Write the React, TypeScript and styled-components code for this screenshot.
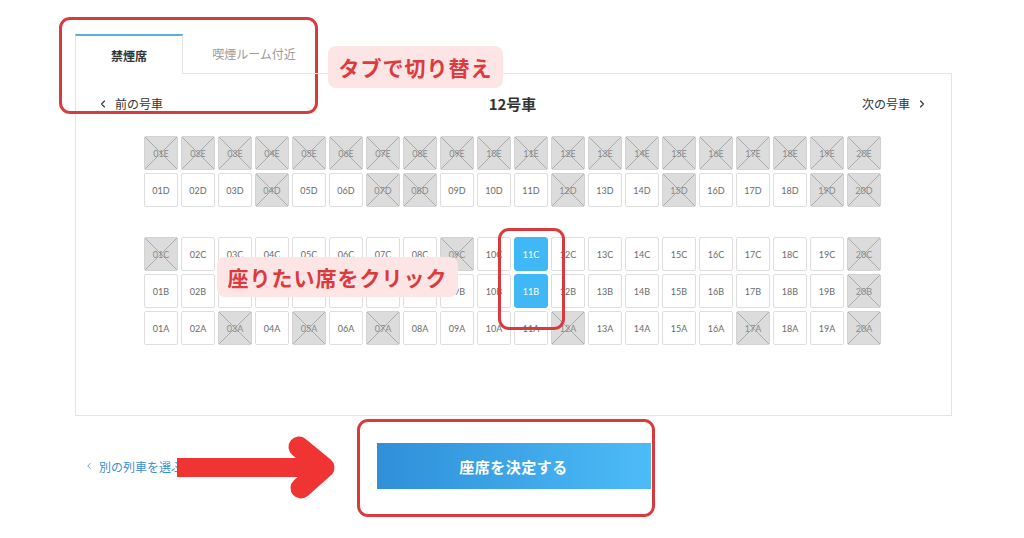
import { ChevronLeft, ChevronRight } from "lucide-react";
import styled, { createGlobalStyle, css } from "styled-components";

type SeatState = "free" | "taken" | "selected";

const GlobalStyle = createGlobalStyle`
	html, body {
		margin: 0;
		background: #ffffff;
		font-family: "Noto Sans CJK JP", "Noto Sans", sans-serif;
		color: #333333;
	}
`;

const Page = styled.div`
	position: relative;
	width: 1024px;
	height: 538px;
	overflow: hidden;
	padding: 34px 0 0 75px;
	box-sizing: border-box;
`;

const Content = styled.div`
	width: 877px;
`;

const TabBar = styled.div`
	display: flex;
	height: 40px;
	position: relative;
	z-index: 1;
	margin-bottom: -1px;
`;

const Tab = styled.div<{ $active?: boolean }>`
	display: flex;
	align-items: center;
	justify-content: center;
	box-sizing: border-box;
	font-size: 12px;
	${(p) =>
		p.$active
			? css`
					width: 108px;
					background: #fff;
					font-weight: 700;
					color: #333;
					border: 1px solid #e4e4e4;
					border-top: 2px solid #5aafdc;
					border-bottom: none;
			  `
			: css`
					width: 142px;
					color: #9a9a9a;
					border-bottom: 1px solid #e4e4e4;
			  `}
`;

const Panel = styled.div`
	border: 1px solid #e4e4e4;
	padding: 19px 23px 70px 21px;
`;

const Header = styled.div`
	display: grid;
	grid-template-columns: 1fr auto 1fr;
	align-items: center;
	height: 20px;
`;

const NavLink = styled.div<{ $right?: boolean }>`
	display: flex;
	align-items: center;
	gap: 6px;
	font-size: 12px;
	color: #333;
	justify-self: ${(p) => (p.$right ? "end" : "start")};
`;

const CarTitle = styled.div`
	font-size: 15px;
	font-weight: 700;
	color: #333;
`;

const SeatMap = styled.div`
	margin-top: 23px;
	display: flex;
	flex-direction: column;
	align-items: center;
	gap: 30px;
`;

const SeatBlock = styled.div`
	display: grid;
	grid-template-columns: repeat(20, 34px);
	grid-auto-rows: 34px;
	gap: 3px;
`;

const Seat = styled.div<{ $state: SeatState }>`
	display: flex;
	align-items: center;
	justify-content: center;
	box-sizing: border-box;
	border-radius: 2px;
	font-family: "Lato", "Open Sans", sans-serif;
	font-size: 9px;
	${(p) =>
		p.$state === "free" &&
		css`
			background: #fff;
			border: 1px solid #dedede;
			color: #6a6a6a;
		`}
	${(p) =>
		p.$state === "taken" &&
		css`
			background-color: #dcdcdc;
			background-image: linear-gradient(
					to top right,
					transparent calc(50% - 0.7px),
					#a9a9a9 50%,
					transparent calc(50% + 0.7px)
				),
				linear-gradient(
					to bottom right,
					transparent calc(50% - 0.7px),
					#a9a9a9 50%,
					transparent calc(50% + 0.7px)
				);
			border: 1px solid #d2d2d2;
			color: #8a8a8a;
		`}
	${(p) =>
		p.$state === "selected" &&
		css`
			background: #3fb8f5;
			border: 1px solid #3fb8f5;
			border-radius: 3px;
			color: #fff;
		`}
`;

const Footer = styled.div`
	display: grid;
	grid-template-columns: 1fr auto 1fr;
	align-items: center;
	margin-top: 27px;
`;

const BackLink = styled.div`
	display: flex;
	align-items: center;
	gap: 5px;
	padding-left: 9px;
	font-size: 12px;
	color: #3d8fd1;
	justify-self: start;
`;

const SubmitButton = styled.button`
	width: 274px;
	height: 46px;
	border: none;
	border-radius: 0;
	background: linear-gradient(to right, #2f8fd8, #4cbcf7);
	color: #fff;
	font-family: inherit;
	font-size: 15px;
	font-weight: 700;
	letter-spacing: 0.5px;
`;

/* annotations drawn over the screenshot */
const Highlight = styled.div<{ $x: number; $y: number; $w: number; $h: number }>`
	position: absolute;
	left: ${(p) => p.$x}px;
	top: ${(p) => p.$y}px;
	width: ${(p) => p.$w}px;
	height: ${(p) => p.$h}px;
	box-sizing: border-box;
	border: 3px solid #d93a3d;
	border-radius: 11px;
	pointer-events: none;
`;

const Callout = styled.div<{ $x: number; $y: number; $w: number; $h: number }>`
	position: absolute;
	left: ${(p) => p.$x}px;
	top: ${(p) => p.$y}px;
	width: ${(p) => p.$w}px;
	height: ${(p) => p.$h}px;
	display: flex;
	align-items: center;
	justify-content: center;
	background: #fde5e5;
	border-radius: 8px;
	color: #dd3a3c;
	font-size: 21px;
	font-weight: 700;
	letter-spacing: 1px;
`;

const Arrow = styled.svg`
	position: absolute;
	left: 170px;
	top: 428px;
`;

const rows: { id: string; taken: number[]; selected?: number[] }[][] = [
	[
		{ id: "E", taken: Array.from({ length: 20 }, (_, i) => i + 1) },
		{ id: "D", taken: [4, 7, 8, 12, 15, 19, 20] },
	],
	[
		{ id: "C", taken: [1, 9, 20], selected: [11] },
		{ id: "B", taken: [20], selected: [11] },
		{ id: "A", taken: [3, 5, 7, 12, 17, 20] },
	],
];

function seatState(row: { taken: number[]; selected?: number[] }, n: number): SeatState {
	if (row.selected?.includes(n)) return "selected";
	if (row.taken.includes(n)) return "taken";
	return "free";
}

export default function App() {
	return (
		<Page>
			<GlobalStyle />
			<Content>
				<TabBar>
					<Tab $active>禁煙席</Tab>
					<Tab>喫煙ルーム付近</Tab>
				</TabBar>
				<Panel>
					<Header>
						<NavLink>
							<ChevronLeft size={12} strokeWidth={2.2} />
							前の号車
						</NavLink>
						<CarTitle>12号車</CarTitle>
						<NavLink $right>
							次の号車
							<ChevronRight size={12} strokeWidth={2.2} />
						</NavLink>
					</Header>
					<SeatMap>
						{rows.map((block, bi) => (
							<SeatBlock key={bi}>
								{block.flatMap((row) =>
									Array.from({ length: 20 }, (_, i) => {
										const n = i + 1;
										const label = `${String(n).padStart(2, "0")}${row.id}`;
										return (
											<Seat key={label} $state={seatState(row, n)}>
												{label}
											</Seat>
										);
									})
								)}
							</SeatBlock>
						))}
					</SeatMap>
				</Panel>
				<Footer>
					<BackLink>
						<ChevronLeft size={10} strokeWidth={2} />
						別の列車を選ぶ
					</BackLink>
					<SubmitButton>座席を決定する</SubmitButton>
				</Footer>
			</Content>

			<Highlight $x={59} $y={17} $w={259} $h={97} />
			<Callout $x={328} $y={46} $w={175} $h={42}>
				タブで切り替え
			</Callout>
			<Callout $x={217} $y={257} $w={241} $h={40}>
				座りたい席をクリック
			</Callout>
			<Highlight $x={498} $y={228} $w={67} $h={102} />
			<Highlight $x={357} $y={419} $w={298} $h={98} />
			<Arrow width={180} height={80} viewBox="0 0 180 80">
				<rect x={7} y={30} width={140} height={19} fill="#f03434" />
				<polyline
					points="129,19 154,39.5 131,60"
					fill="none"
					stroke="#f03434"
					strokeWidth={21}
					strokeLinecap="round"
					strokeLinejoin="round"
				/>
			</Arrow>
		</Page>
	);
}
